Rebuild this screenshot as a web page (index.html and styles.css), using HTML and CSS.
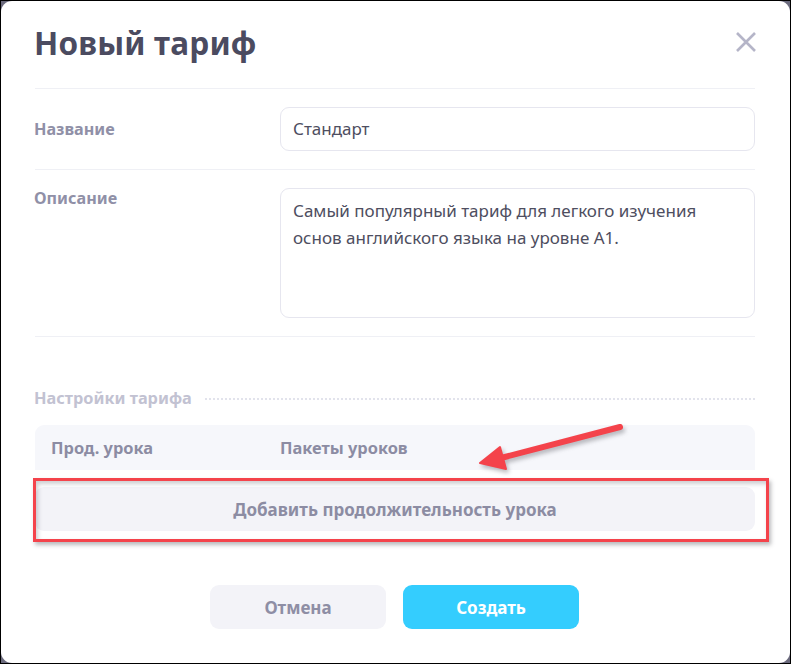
FILE: index.html
```html
<!DOCTYPE html>
<html lang="ru">
<head>
<meta charset="utf-8">
<title>Новый тариф</title>
<link rel="stylesheet" href="styles.css">
</head>
<body>
<div class="frame">
  <div class="modal">
    <div class="header">
      <h1 class="title">Новый тариф</h1>
      <button class="close" aria-label="Закрыть">
        <svg width="22" height="22" viewBox="0 0 22 22"><path d="M2 2 L20 20 M20 2 L2 20" stroke="#b5b5c8" stroke-width="2.6" fill="none"/></svg>
      </button>
    </div>
    <div class="row row-center">
      <div class="label">Название</div>
      <div class="field input">Стандарт</div>
    </div>
    <div class="row">
      <div class="label">Описание</div>
      <div class="field textarea">Самый популярный тариф для легкого изучения основ английского языка на уровне А1.</div>
    </div>
    <div class="section">
      <span class="section-title">Настройки тарифа</span>
      <span class="dots"></span>
    </div>
    <div class="table-head">
      <div class="col-a">Прод. урока</div>
      <div class="col-b">Пакеты уроков</div>
    </div>
    <div class="add-btn">Добавить продолжительность урока</div>
    <div class="footer">
      <button class="btn btn-cancel">Отмена</button>
      <button class="btn btn-create">Создать</button>
    </div>
    <div class="mark-box"></div>
    <svg class="mark-arrow" width="180" height="70" viewBox="0 0 180 70">
      <g fill="#f4434b" stroke="#f4434b">
        <line x1="158" y1="13" x2="35" y2="45" stroke-width="6" stroke-linecap="round"/>
        <path d="M18 49 L38 33 L44 55 Z" stroke-width="2" stroke-linejoin="round"/>
      </g>
    </svg>
  </div>
</div>
</body>
</html>
```
FILE: styles.css
```css
* { box-sizing: border-box; }
html, body { margin: 0; padding: 0; }
body {
  font-family: "Noto Sans", "Open Sans", sans-serif;
  background: #000;
}
.frame {
  width: 791px;
  height: 664px;
  border: 1px solid #000;
  background: #6b6a7d;
}
.modal {
  position: relative;
  height: 100%;
  background: #fff;
  border-radius: 11px;
  padding: 0 35px 0 33px;
}
.header {
  height: 88px;
  display: flex;
  align-items: center;
  justify-content: space-between;
  border-bottom: 1px solid #eff0f5;
  margin-left: 1px;
}
.title {
  margin: 0;
  font-size: 31.5px;
  font-weight: 700;
  color: #4b4b60;
  letter-spacing: 0.2px;
  padding-bottom: 4px;
  margin-left: -1px;
}
.close {
  border: 0;
  background: none;
  padding: 0;
  width: 22px;
  height: 22px;
  margin-right: -2px;
  margin-top: -6px;
  cursor: pointer;
}
.close svg { display: block; }
.row {
  display: flex;
  align-items: flex-start;
  padding: 18px 0;
  border-bottom: 1px solid #eff0f5;
  margin-left: 1px;
}
.row-center { align-items: center; }
.label {
  width: 246px;
  flex: none;
  font-size: 16.2px;
  font-weight: 700;
  color: #9090a7;
  line-height: 20px;
  margin-left: -1px;
  padding-right: 1px;
}
.field {
  flex: 1;
  border: 1px solid #e6e6ef;
  border-radius: 9px;
  color: #4e4e60;
  font-size: 17px;
  padding: 0 12px;
}
.input {
  height: 44px;
  line-height: 42px;
}
.textarea {
  height: 130px;
  padding-top: 8px;
  line-height: 27px;
  padding-right: 30px;
}
.section {
  display: flex;
  align-items: center;
  margin-top: 51px;
  height: 20px;
}
.section-title {
  font-size: 16.3px;
  font-weight: 700;
  color: #c2c2d2;
  white-space: nowrap;
}
.dots {
  flex: 1;
  margin-left: 13px;
  border-top: 2px dotted #e2e3ec;
  margin-top: 1px;
}
.table-head {
  display: flex;
  align-items: center;
  height: 45px;
  margin-top: 17px;
  margin-left: 1px;
  background: #f6f7fb;
  border-radius: 9px 9px 0 0;
  font-size: 16.4px;
  font-weight: 700;
  color: #8c8ca3;
  padding-left: 16px;
}
.col-a { width: 229px; }
.add-btn {
  margin-top: 17px;
  margin-left: 1px;
  height: 44px;
  background: #f3f3f8;
  border-radius: 9px;
  display: flex;
  align-items: center;
  justify-content: center;
  font-size: 17px;
  font-weight: 700;
  color: #8c8ca3;
}
.footer {
  display: flex;
  justify-content: center;
  gap: 17px;
  margin-top: 54px;
}
.btn {
  width: 176px;
  height: 44px;
  border: 0;
  border-radius: 9px;
  font-family: inherit;
  font-size: 17px;
  font-weight: 700;
  cursor: pointer;
}
.btn-cancel { background: #f3f3f8; color: #8e8ea5; }
.btn-create { background: #34cdfe; color: #fff; }
.mark-box {
  position: absolute;
  left: 32px;
  top: 477px;
  width: 736px;
  height: 64px;
  border: 3px solid #f4434b;
  box-shadow: 2px 3px 4px rgba(60, 60, 70, 0.35), inset 2px 3px 4px rgba(60, 60, 70, 0.25);
}
.mark-arrow {
  position: absolute;
  left: 461px;
  top: 413px;
  filter: drop-shadow(2px 3px 2px rgba(60, 60, 70, 0.35));
}
```
